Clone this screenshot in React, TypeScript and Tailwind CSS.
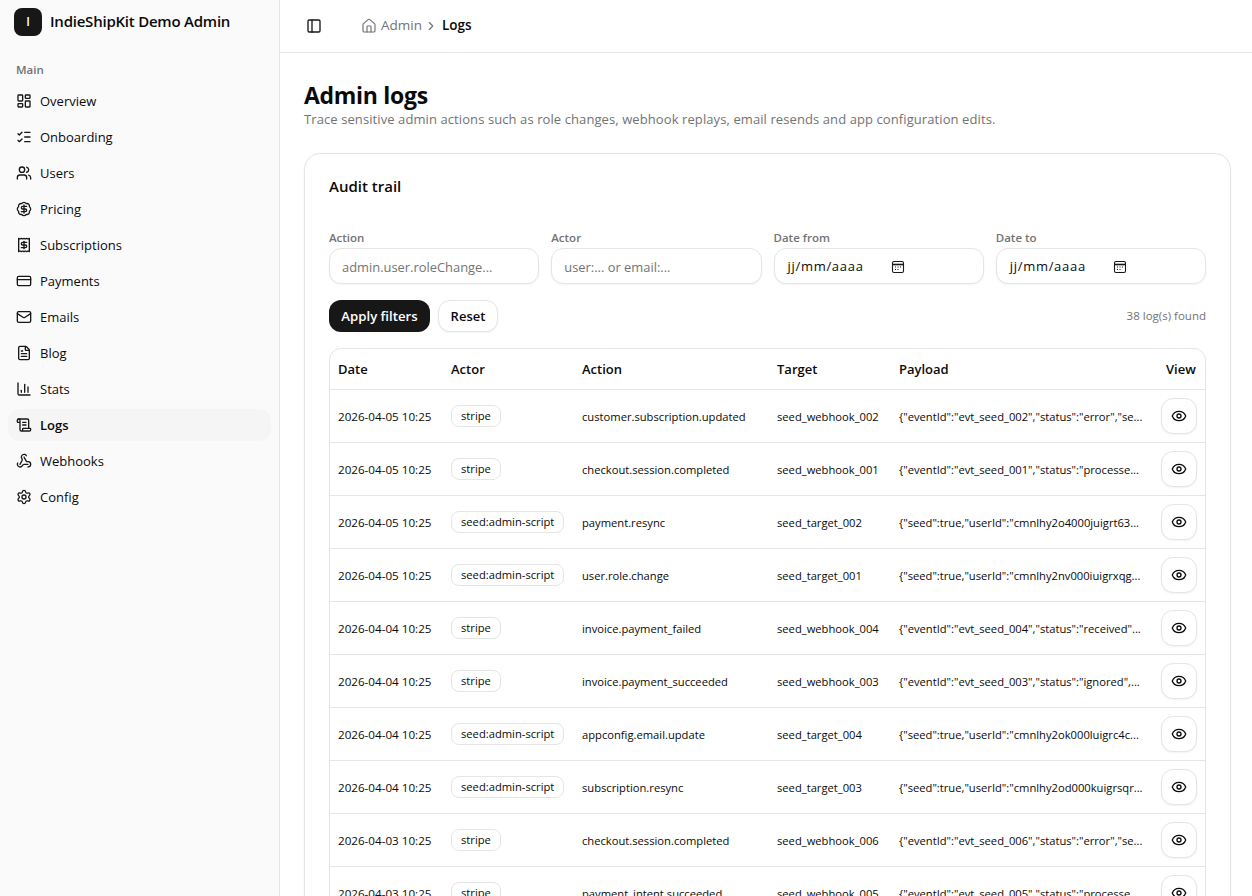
import React from "react";
import {
  BadgeDollarSign,
  ChartColumn,
  CreditCard,
  Eye,
  FileText,
  House,
  ChevronRight,
  LayoutDashboard,
  ListChecks,
  Mail,
  PanelLeft,
  Receipt,
  ScrollText,
  Settings,
  Users,
  Webhook,
} from "lucide-react";

const nav = [
  ["Overview", LayoutDashboard],
  ["Onboarding", ListChecks],
  ["Users", Users],
  ["Pricing", BadgeDollarSign],
  ["Subscriptions", Receipt],
  ["Payments", CreditCard],
  ["Emails", Mail],
  ["Blog", FileText],
  ["Stats", ChartColumn],
  ["Logs", ScrollText],
  ["Webhooks", Webhook],
  ["Config", Settings],
] as const;

const rows = [
  ["2026-04-05 10:25", "stripe", "customer.subscription.updated", "seed_webhook_002", '{"eventId":"evt_seed_002","status":"error","se...'],
  ["2026-04-05 10:25", "stripe", "checkout.session.completed", "seed_webhook_001", '{"eventId":"evt_seed_001","status":"processe...'],
  ["2026-04-05 10:25", "seed:admin-script", "payment.resync", "seed_target_002", '{"seed":true,"userId":"cmnlhy2o4000juigrt63...'],
  ["2026-04-05 10:25", "seed:admin-script", "user.role.change", "seed_target_001", '{"seed":true,"userId":"cmnlhy2nv000iuigrxqg...'],
  ["2026-04-04 10:25", "stripe", "invoice.payment_failed", "seed_webhook_004", '{"eventId":"evt_seed_004","status":"received"...'],
  ["2026-04-04 10:25", "stripe", "invoice.payment_succeeded", "seed_webhook_003", '{"eventId":"evt_seed_003","status":"ignored",...'],
  ["2026-04-04 10:25", "seed:admin-script", "appconfig.email.update", "seed_target_004", '{"seed":true,"userId":"cmnlhy2ok000luigrc4c...'],
  ["2026-04-04 10:25", "seed:admin-script", "subscription.resync", "seed_target_003", '{"seed":true,"userId":"cmnlhy2od000kuigrsqr...'],
  ["2026-04-03 10:25", "stripe", "checkout.session.completed", "seed_webhook_006", '{"eventId":"evt_seed_006","status":"error","se...'],
  ["2026-04-03 10:25", "stripe", "payment_intent.succeeded", "seed_webhook_005", '{"eventId":"evt_seed_005","status":"processe...'],
];

function CalendarGlyph() {
  return (
    <svg width="14" height="14" viewBox="0 0 14 14" fill="none" stroke="#171717" strokeWidth="1.1">
      <rect x="1.5" y="1.5" width="11" height="11" rx="1.5" />
      <path d="M1.5 4.5h11" strokeWidth="1.6" />
      <path d="M4 7h1M6.5 7h1M9 7h1M4 9.5h1M6.5 9.5h1" strokeWidth="1.2" />
    </svg>
  );
}

function TextField({ label, placeholder }: { label: string; placeholder: string }) {
  return (
    <div className="flex flex-col gap-[2px]">
      <span className="text-[11.5px] leading-[16px] font-semibold text-[#737373]">{label}</span>
      <div className="flex h-9 items-center rounded-xl border border-[#e5e5e5] bg-white px-3 pt-[3px] text-[12.9px] text-[#737373] shadow-xs">
        {placeholder}
      </div>
    </div>
  );
}

function DateField({ label }: { label: string }) {
  return (
    <div className="flex flex-col gap-[2px]">
      <span className="text-[11.5px] leading-[16px] font-semibold text-[#737373]">{label}</span>
      <div className="flex h-9 items-center rounded-xl border border-[#e5e5e5] bg-white pt-[2px] pl-[13px] text-[13px] text-[#0a0a0a] shadow-xs">
        <span className="w-[103px] tracking-[0.7px]">jj/mm/aaaa</span>
        <CalendarGlyph />
      </div>
    </div>
  );
}

export default function App() {
  return (
    <div
      className="flex h-screen w-full overflow-hidden bg-white text-[#0a0a0a]"
      style={{ fontFamily: '"Open Sans", sans-serif' }}
    >
      <aside className="flex w-[280px] shrink-0 flex-col border-r border-[#e5e5e5] bg-[#fafafa] px-2">
        <div className="flex h-[43px] items-center gap-2 px-1.5">
          <div className="flex h-7 w-7 items-center justify-center rounded-lg bg-[#171717] text-xs font-semibold text-white">I</div>
          <span className="text-[15px] font-semibold tracking-[-0.23px]">IndieShipKit Demo Admin</span>
        </div>
        <div className="flex h-[42px] items-center px-2 pt-[11px] text-[11.5px] font-semibold text-[#737373]">Main</div>
        <nav className="flex flex-col gap-1">
          {nav.map(([name, Icon]) => (
            <div
              key={name}
              className={
                "flex h-8 items-center gap-2 rounded-xl px-2 text-[13px] " +
                (name === "Logs" ? "bg-[#f5f5f5] font-semibold" : "")
              }
            >
              <Icon size={16} strokeWidth={2} className="shrink-0 text-[#171717]" />
              <span className="pt-[2px]">{name}</span>
            </div>
          ))}
        </nav>
      </aside>

      <main className="flex min-w-0 flex-1 flex-col">
        <header className="flex h-[53px] shrink-0 items-center border-b border-[#e5e5e5] pl-[26px]">
          <PanelLeft size={16} strokeWidth={2} className="text-[#171717]" />
          <div className="ml-[39px] flex items-center text-[13.5px]">
            <House size={16} strokeWidth={1.75} className="text-[#737373]" />
            <span className="ml-[4px] pb-[2px] text-[#737373]">Admin</span>
            <ChevronRight size={14} className="mr-[4px] ml-[2px] text-[#737373]" />
            <span className="pb-[2px] font-semibold">Logs</span>
          </div>
        </header>

        <div className="flex flex-col pt-[25px] pr-[21px] pl-6">
          <h1 className="text-[23px] leading-[34px] font-bold tracking-[-0.3px]">Admin logs</h1>
          <p className="text-[13px] leading-[15px] tracking-[0.09px] text-[#737373]">
            Trace sensitive admin actions such as role changes, webhook replays, email resends and app configuration edits.
          </p>

          <section className="mt-[26px] flex flex-col rounded-2xl border border-[#e5e5e5] bg-white px-6 pt-[23px] shadow-xs">
            <h2 className="text-[15px] leading-[18px] font-semibold">Audit trail</h2>

            <div className="mt-[35px] grid grid-cols-4 gap-3">
              <TextField label="Action" placeholder="admin.user.roleChange..." />
              <TextField label="Actor" placeholder="user:... or email:..." />
              <DateField label="Date from" />
              <DateField label="Date to" />
            </div>

            <div className="mt-4 flex items-center gap-2">
              <button className="flex h-8 w-[101px] items-center justify-center rounded-xl bg-[#171717] pt-[2px] text-[13.2px] font-semibold text-white">Apply filters</button>
              <button className="flex h-8 w-[60px] items-center justify-center rounded-xl border border-[#e5e5e5] bg-white pt-[1px] text-[13px] font-semibold shadow-xs">Reset</button>
              <span className="ml-auto text-[11.5px] text-[#737373]">38 log(s) found</span>
            </div>

            <div className="mt-4 overflow-hidden rounded-xl border border-[#e5e5e5]">
              <table className="w-full table-fixed border-collapse">
                <colgroup>
                  <col className="w-[113px]" />
                  <col className="w-[131px]" />
                  <col className="w-[195px]" />
                  <col className="w-[122px]" />
                  <col className="w-[267px]" />
                  <col className="w-[47px]" />
                </colgroup>
                <thead>
                  <tr className="h-10 border-b border-[#e5e5e5] text-left text-[13px]">
                    <th className="px-2 pt-[1px] font-semibold">Date</th>
                    <th className="px-2 pt-[1px] font-semibold">Actor</th>
                    <th className="px-2 pt-[1px] font-semibold">Action</th>
                    <th className="px-2 pt-[1px] font-semibold">Target</th>
                    <th className="px-2 pt-[1px] font-semibold">Payload</th>
                    <th className="px-2 pt-[1px] font-semibold">View</th>
                  </tr>
                </thead>
                <tbody>
                  {rows.map((r, i) => (
                    <tr key={i} className="h-[53px] border-b border-[#e5e5e5] text-[11.2px]">
                      <td className="px-2 pt-[3px] text-[11.65px] whitespace-nowrap">{r[0]}</td>
                      <td className="px-2 whitespace-nowrap">
                        <span className="inline-flex h-[22px] items-center rounded-lg border border-[#e5e5e5] px-[9px] pt-[1px]">{r[1]}</span>
                      </td>
                      <td className="px-2 pt-[3px] whitespace-nowrap">{r[2]}</td>
                      <td className="px-2 pt-[3px] whitespace-nowrap">{r[3]}</td>
                      <td className="px-2 pt-[3px] whitespace-nowrap">{r[4]}</td>
                      <td className="pr-2">
                        <button className="ml-auto flex h-9 w-9 items-center justify-center rounded-xl border border-[#e5e5e5] bg-white shadow-xs">
                          <Eye size={16} strokeWidth={2} />
                        </button>
                      </td>
                    </tr>
                  ))}
                </tbody>
              </table>
            </div>
          </section>
        </div>
      </main>
    </div>
  );
}
